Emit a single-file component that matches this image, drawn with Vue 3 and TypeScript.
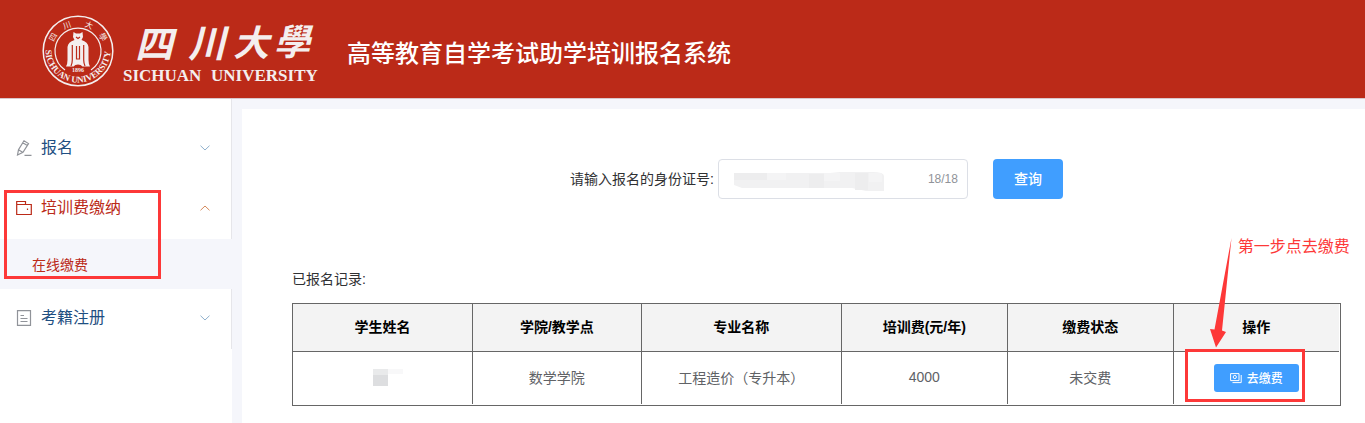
<script setup lang="ts">
import { ref } from 'vue'

interface Column {
  label: string
  width: string
}

const idNumber = ref('')
const columns: Column[] = [
  { label: '学生姓名', width: '17.2%' },
  { label: '学院/教学点', width: '16.15%' },
  { label: '专业名称', width: '19.1%' },
  { label: '培训费(元/年)', width: '15.9%' },
  { label: '缴费状态', width: '15.85%' },
  { label: '操作', width: '15.8%' },
]
const records = [
  { school: '数学学院', major: '工程造价（专升本）', fee: '4000', status: '未交费' },
]
</script>

<template>
  <div class="page">
    <header class="header">
      <svg class="brand" viewBox="0 0 276 76" role="img" aria-label="四川大學 SICHUAN UNIVERSITY">
        <defs>
          <path id="ring-low" d="M4.500 37 A32.500 32.500 0 0 0 69.500 37" />
        </defs>
        <g fill="none" stroke="#f4eeee">
          <circle cx="37" cy="38" r="34.8" stroke-width="1.5" />
          <path d="M24 57 A23 23 0 1 1 50 57" stroke-width="1.2" />
        </g>
        <path
          class="emblem"
          d="M32.500 19 L35 20.500 H39 L41.500 19 L42 24 L40.500 27 Q47 29 47.500 34 V47 Q47.500 51 49 53.500 H41.500 Q40 51.500 37 51.500 Q34 51.500 32.500 53.500 H25 Q26.500 51 26.500 47 V34 Q27 29 33.500 27 L32 24 Z"
        />
        <path class="emblem-cut" d="M31.300 32 V47 Q31.300 50 30 53 M42.700 32 V47 Q42.700 50 44 53 M35.500 33 V46 H38.500 V33 M35 24 L37 25.500 L39 24" />
        <g class="seal-text">
          <text class="ring-word"><textPath href="#ring-low">SICHUAN UNIVERSITY</textPath></text>
          <text class="year" x="37" y="59">1896</text>
          <text class="seal-char" x="12" y="27" transform="rotate(-60 12 24)">四</text>
          <text class="seal-char" x="26" y="15" transform="rotate(-20 26 12)">川</text>
          <text class="seal-char" x="48" y="15" transform="rotate(20 48 12)">大</text>
          <text class="seal-char" x="62" y="27" transform="rotate(60 62 24)">學</text>
        </g>
        <g class="script">
          <text x="113" y="45" font-size="38">四</text>
          <text x="166" y="44" font-size="38">川</text>
          <text x="210" y="43" font-size="36">大</text>
          <text x="251" y="42" font-size="36">學</text>
        </g>
        <text class="latin" x="82" y="68">SICHUAN</text>
        <text class="latin" x="170" y="68">UNIVERSITY</text>
      </svg>
      <h1>高等教育自学考试助学培训报名系统</h1>
    </header>

    <div class="body">
      <aside class="sidebar">
        <nav class="menu">
          <a class="item" href="#">
            <svg class="icon" viewBox="0 0 16 16"><path d="M1.500 15 L2.500 9.800 L8 .8 L12.500 3.600 L7 12.400 Z M2.500 9.800 L7 12.400 M6.800 2.800 L11.300 5.600 M8.500 15.300 H15.500" /></svg>
            <span>报名</span>
            <svg class="arrow" viewBox="0 0 10 6"><path d="M.5 .7 L5 5 L9.500 .7" /></svg>
          </a>
          <a class="item active" href="#">
            <svg class="icon" viewBox="0 0 16 16"><path d="M.7 14.500 V1.500 H9.500 V4.500 H15.300 V14.500 Z M.7 4.500 H9.500 M11.500 8.500 v1.500" /></svg>
            <span>培训费缴纳</span>
            <svg class="arrow" viewBox="0 0 10 6"><path d="M.5 5.300 L5 1 L9.500 5.300" /></svg>
          </a>
          <a class="subitem" href="#">在线缴费</a>
          <a class="item" href="#">
            <svg class="icon" viewBox="0 0 16 16"><path d="M1.500 .7 H14.500 V15.300 H1.500 Z M4.500 5.500 H8 M4.500 8.500 H11.500 M4.500 11.500 H11.500" /></svg>
            <span>考籍注册</span>
            <svg class="arrow" viewBox="0 0 10 6"><path d="M.5 .7 L5 5 L9.500 .7" /></svg>
          </a>
          <span class="mark mark-menu"></span>
        </nav>
      </aside>

      <main class="content">
        <form class="query" @submit.prevent>
          <label for="id-number">请输入报名的身份证号:</label>
          <div class="field">
            <input id="id-number" v-model="idNumber" type="text" maxlength="18" />
            <svg class="redacted" viewBox="0 0 150 22" aria-hidden="true">
              <path fill="#f1f1f2" d="M0 2 H96 L106 1 H138 Q150 1 150 5 V20 H132 L118 17 H8 L0 14 Z" />
              <path fill="#ededee" d="M0 2 H33 V9 H0 Z M75 3 H90 V17 H75 Z M121 2 H134 V19 H121 Z" />
              <path fill="#f4f4f5" d="M33 2 H52 V9 H33 Z M90 2 H106 V10 H90 Z M135 2 H148 V11 H135 Z" />
            </svg>
            <span class="count">18/18</span>
          </div>
          <button class="search" type="submit">查询</button>
        </form>

        <p class="caption">已报名记录:</p>
        <div class="table-box">
          <table>
            <colgroup>
              <col v-for="c in columns" :key="c.label" :style="{ width: c.width }" />
            </colgroup>
            <thead>
              <tr>
                <th v-for="c in columns" :key="c.label">{{ c.label }}</th>
              </tr>
            </thead>
            <tbody>
              <tr v-for="r in records" :key="r.school">
                <td>
                  <svg class="name" viewBox="0 0 42 18" aria-hidden="true">
                    <path fill="#e9eaeb" d="M12 1 H27 V7 H12 Z" />
                    <path fill="#dddee0" d="M12 7 H27 V18 H12 Z" />
                    <path fill="#f8f8f9" d="M27 1 H42 V6 H27 Z" />
                  </svg>
                </td>
                <td>{{ r.school }}</td>
                <td>{{ r.major }}</td>
                <td>{{ r.fee }}</td>
                <td>{{ r.status }}</td>
                <td class="action-cell">
                  <div class="action">
                    <button class="pay" type="button">
                      <svg viewBox="0 0 12 12"><path d="M.6 1.600 H9 V8.600 H.6 Z M11.200 3 V10.600 H2.500" /><circle cx="4.800" cy="5" r="1.600" /></svg>
                      <span>去缴费</span>
                    </button>
                    <span class="mark mark-pay"></span>
                    <svg class="pointer" viewBox="0 0 22 110"><path d="M21.500 0 L12 92.500 L16 94 L6 109.500 L0 91 L4.500 91.500 Z" /></svg>
                    <span class="hint">第一步点去缴费</span>
                  </div>
                </td>
              </tr>
            </tbody>
          </table>
        </div>
      </main>
    </div>
  </div>
</template>

<style>
body {
  margin: 0;
  background: #f5f6fb;
}
</style>

<style scoped>
* {
  box-sizing: border-box;
}
.page {
  display: flex;
  flex-direction: column;
  min-height: 100vh;
  overflow: hidden;
  font-family: "Liberation Sans", "Noto Sans CJK SC", sans-serif;
  font-size: 14px;
  color: #303133;
}
.header {
  display: flex;
  align-items: center;
  gap: 30px;
  height: 99px;
  padding: 4px 41px 0;
  background: #bb2a18;
  border-bottom: 1px solid #d9c6cb;
}
.brand {
  width: 276px;
  height: 76px;
  flex: none;
  overflow: visible;
}
.brand text,
.emblem {
  fill: #f4eeee;
}
.emblem-cut {
  fill: none;
  stroke: #bb2a18;
  stroke-width: 1.2;
}
.seal-text text,
.script text {
  text-anchor: middle;
}
.seal-text .ring-word {
  font: bold 9px "Liberation Serif", serif;
  text-anchor: start;
}
.seal-text .year {
  font: bold 6px "Liberation Serif", serif;
}
.seal-text .seal-char {
  font: 8px "Noto Sans CJK TC", sans-serif;
}
.script {
  font-family: "Noto Sans CJK TC", sans-serif;
  font-weight: 700;
  font-style: italic;
}
.latin {
  font: bold 17px "Liberation Serif", serif;
}
h1 {
  margin: 0;
  padding-top: 6px;
  font-size: 24px;
  font-weight: 500;
  line-height: 32px;
  color: #fff;
  white-space: nowrap;
}
.body {
  flex: 1;
  display: flex;
  gap: 10px;
}
.sidebar {
  flex: none;
  width: 232px;
  padding-top: 20px;
  background: linear-gradient(#e6e6ea, #e6e6ea) right top / 1px 250px no-repeat #fff;
}
.menu {
  position: relative;
}
a {
  text-decoration: none;
}
.item {
  display: flex;
  align-items: center;
  gap: 9px;
  height: 60px;
  padding: 0 22px 2px 16px;
  font-size: 16px;
  color: #1f4f82;
}
.item span {
  padding-bottom: 4px;
}
.icon {
  width: 16px;
  height: 16px;
  fill: none;
  stroke: #909399;
  stroke-width: 1.2;
}
.arrow {
  width: 10px;
  height: 6px;
  margin-left: auto;
  fill: none;
  stroke: #8fb0cc;
}
.active {
  color: #bb2a18;
}
.active .icon {
  stroke: #bb2a18;
}
.active .arrow {
  stroke: #d58a5c;
}
.subitem {
  display: block;
  height: 50px;
  padding-left: 32px;
  line-height: 52px;
  color: #bb2a18;
  background: #f5f6fb;
}
.mark {
  position: absolute;
  border: 3px solid #fd3838;
  pointer-events: none;
}
.mark-menu {
  left: 4px;
  top: 71px;
  width: 157px;
  height: 89px;
}
.content {
  flex: 1;
  min-width: 0;
  margin-top: 10px;
  padding: 50px 24px 17px 50px;
  background: #fff;
}
.query {
  display: flex;
  align-items: center;
  justify-content: center;
}
.query label {
  padding-bottom: 2px;
}
.field {
  position: relative;
  width: 250px;
  margin: 0 25px 0 4px;
}
.field input {
  display: block;
  width: 100%;
  height: 40px;
  padding: 0 50px 0 15px;
  font: inherit;
  background: #fff;
  border: 1px solid #dcdfe6;
  border-radius: 4px;
  outline: none;
}
.redacted {
  position: absolute;
  left: 16px;
  top: 12px;
  width: 150px;
  height: 22px;
  pointer-events: none;
}
.count {
  position: absolute;
  right: 10px;
  top: 0;
  font-size: 12px;
  line-height: 40px;
  color: #909399;
}
.search {
  width: 70px;
  height: 40px;
  padding: 0 0 2px;
  font: 500 14px "Liberation Sans", "Noto Sans CJK SC", sans-serif;
  color: #fff;
  background: #409eff;
  border: 0;
  border-radius: 4px;
}
.caption {
  margin: 70px 0 14px;
  line-height: 20px;
}
.table-box {
  padding: 0 1px 1px 0;
  border: 1px solid #666;
}
table {
  width: 100%;
  table-layout: fixed;
  border-collapse: separate;
  border-spacing: 0;
}
th,
td {
  padding: 0 0 3px;
  text-align: center;
  border-right: 1px solid #666;
}
th:last-child,
td:last-child {
  border-right: 0;
}
th {
  height: 48px;
  font-weight: 700;
  color: #000;
  background: #f3f3f3;
  border-bottom: 1px solid #666;
}
td {
  height: 52px;
  color: #606266;
}
.action-cell {
  padding-bottom: 0;
}
.name {
  display: block;
  width: 42px;
  height: 18px;
  margin: 0 auto;
}
.action {
  position: relative;
  width: 85px;
  margin: 0 auto;
}
.pay {
  display: flex;
  align-items: center;
  justify-content: center;
  gap: 5px;
  width: 100%;
  height: 28px;
  padding: 0;
  font: 500 12px "Liberation Sans", "Noto Sans CJK SC", sans-serif;
  color: #fff;
  background: #409eff;
  border: 0;
  border-radius: 3px;
}
.pay span {
  padding-bottom: 2px;
}
.pay svg {
  width: 12px;
  height: 12px;
  fill: none;
  stroke: #fff;
}
.mark-pay {
  left: -29px;
  top: -15px;
  width: 120px;
  height: 53px;
}
.pointer {
  position: absolute;
  left: -4px;
  top: -126px;
  width: 22px;
  height: 110px;
  fill: #fd3838;
}
.hint {
  position: absolute;
  left: 24px;
  top: -127px;
  font-size: 16px;
  line-height: 20px;
  color: #fd3838;
  white-space: nowrap;
}
</style>
